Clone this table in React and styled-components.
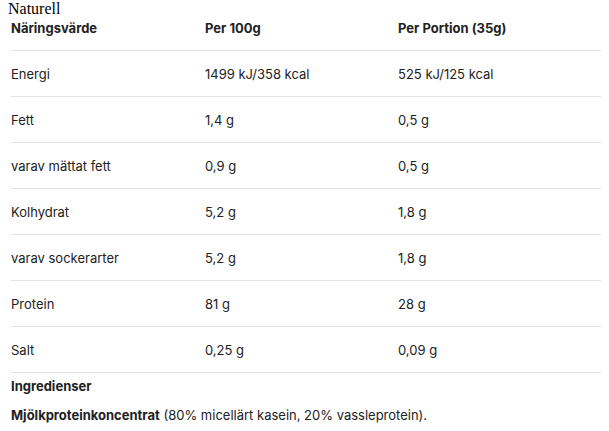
import React from "react";
import styled, { createGlobalStyle } from "styled-components";

const Global = createGlobalStyle`
  body { margin: 0 8px; background: #fff; }
`;

const Title = styled.div`
  font-family: "Liberation Serif", serif;
  font-size: 16px;
  line-height: 18px;
  color: #000;
`;

const Wrap = styled.div`
  margin-left: 3px;
  width: 595px;
  font-family: Inter, "Liberation Sans", sans-serif;
  font-size: 13px;
  line-height: 16px;
  color: #222;
`;

const Row = styled.div`
  display: grid;
  grid-template-columns: 194px 193px 1fr;
  padding: ${(p) => (p.$head ? "2px 0 14px" : "15px 0 14px")};
  border-bottom: 1px solid #e2e2e2;
  font-weight: ${(p) => (p.$head ? 700 : 400)};
`;

const Cell = styled.div`
  white-space: nowrap;
`;

const Heading = styled.div`
  font-weight: 700;
  margin-top: 5px;
`;

const Ingredients = styled.p`
  margin: 13px 0 0;
`;

const rows = [
  ["Energi", "1499 kJ/358 kcal", "525 kJ/125 kcal"],
  ["Fett", "1,4 g", "0,5 g"],
  ["varav mättat fett", "0,9 g", "0,5 g"],
  ["Kolhydrat", "5,2 g", "1,8 g"],
  ["varav sockerarter", "5,2 g", "1,8 g"],
  ["Protein", "81 g", "28 g"],
  ["Salt", "0,25 g", "0,09 g"],
];

export default function App() {
  return (
    <>
      <Global />
      <Title>Naturell</Title>
      <Wrap>
        <Row $head>
          <Cell>Näringsvärde</Cell>
          <Cell>Per 100g</Cell>
          <Cell>Per Portion (35g)</Cell>
        </Row>
        {rows.map((r) => (
          <Row key={r[0]}>
            {r.map((c, i) => (
              <Cell key={i}>{c}</Cell>
            ))}
          </Row>
        ))}
        <Heading>Ingredienser</Heading>
        <Ingredients>
          <b>Mjölkproteinkoncentrat</b> (80% micellärt kasein, 20% vassleprotein).
        </Ingredients>
      </Wrap>
    </>
  );
}
